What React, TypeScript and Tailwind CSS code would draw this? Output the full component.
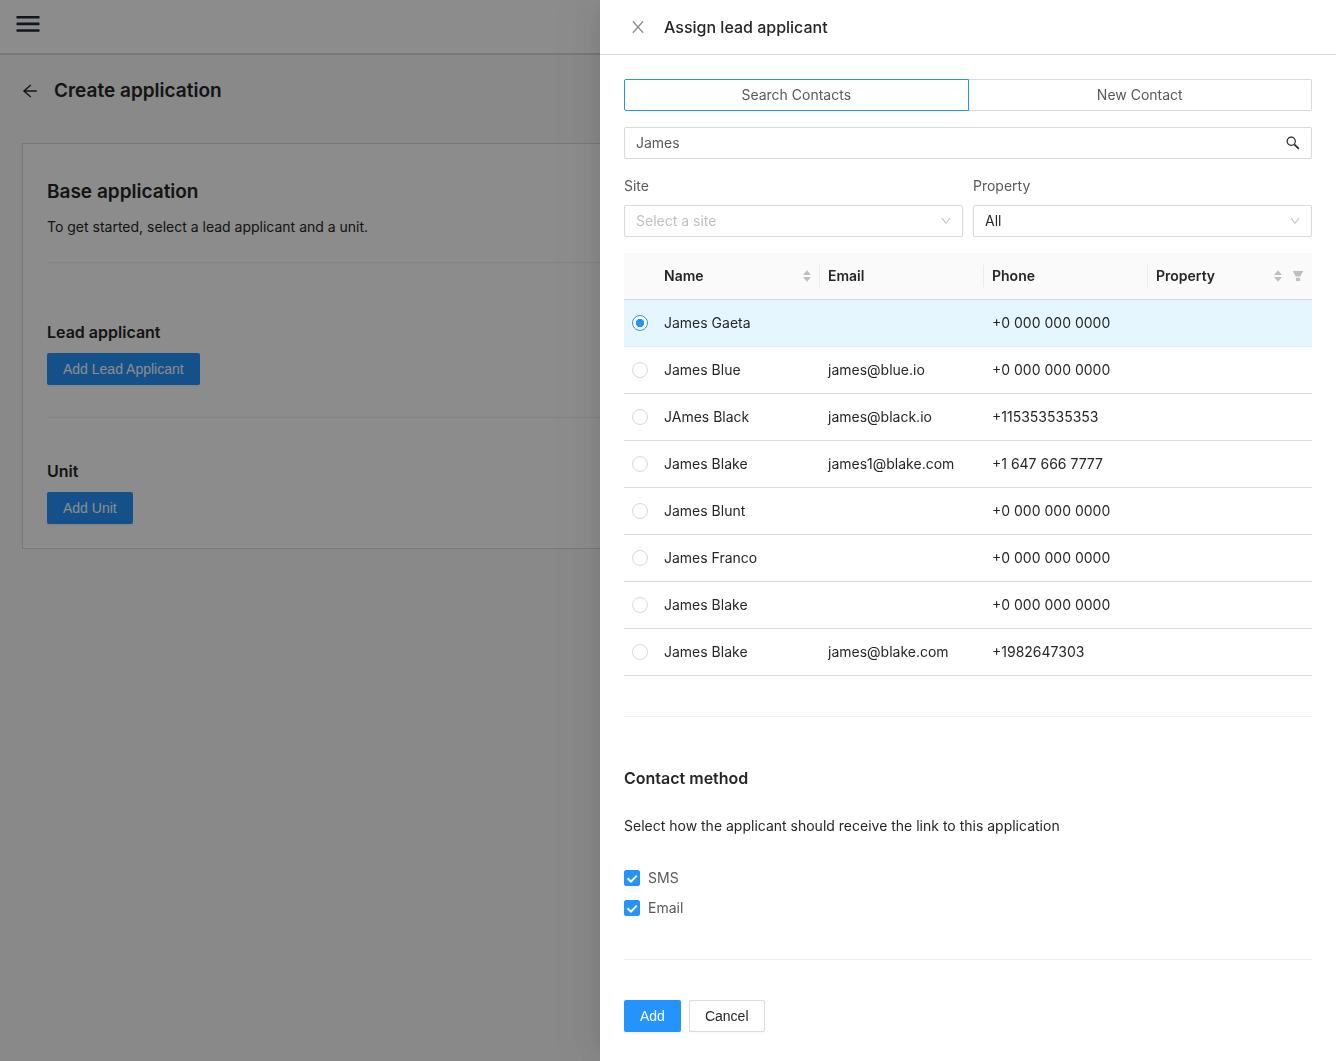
import { useState } from 'react';
import { AiOutlineDown } from 'react-icons/ai';

const contacts = [
  { id: 1, name: 'James Gaeta', email: '', phone: '+0 000 000 0000' },
  { id: 2, name: 'James Blue', email: 'james@blue.io', phone: '+0 000 000 0000' },
  { id: 3, name: 'JAmes Black', email: 'james@black.io', phone: '+115353535353' },
  { id: 4, name: 'James Blake', email: 'james1@blake.com', phone: '+1 647 666 7777' },
  { id: 5, name: 'James Blunt', email: '', phone: '+0 000 000 0000' },
  { id: 6, name: 'James Franco', email: '', phone: '+0 000 000 0000' },
  { id: 7, name: 'James Blake', email: '', phone: '+0 000 000 0000' },
  { id: 8, name: 'James Blake', email: 'james@blake.com', phone: '+1982647303' },
];

const primaryButton =
  'h-8 rounded-xs bg-[#2593fc] px-4 font-["Liberation_Sans",sans-serif] text-sm text-white shadow-[0_2px_0_rgba(0,0,0,0.045)]';

function Sorter() {
  return (
    <button type="button" aria-label="Sort" className="text-[#bfbfbf]">
      <svg width="8" height="12" viewBox="0 0 8 12" fill="currentColor">
        <path d="M4 0.2 7.6 4.6Q7.8 5 7.3 5H0.7Q0.2 5 0.4 4.6Z" />
        <path d="M4 11.8 7.6 7.4Q7.8 7 7.3 7H0.7Q0.2 7 0.4 7.4Z" />
      </svg>
    </button>
  );
}

function HeaderCell({ title, sortable, filterable, divider }: { title: string; sortable?: boolean; filterable?: boolean; divider?: boolean }) {
  return (
    <th scope="col" className="h-[47px] border-b border-[#d9d9d9] p-0 text-left font-semibold">
      <div className={`flex h-[22px] items-center justify-between px-2 ${divider ? 'border-r border-[#ebebeb]' : ''}`}>
        <span>{title}</span>
        <span className="flex items-center gap-2.5">
          {sortable && <Sorter />}
          {filterable && (
            <button type="button" aria-label="Filter" className="text-[#bfbfbf]">
              <svg width="12" height="12" viewBox="0 0 12 12" fill="currentColor">
                <path d="M1.2 1H10.8Q11.2 1 11 1.4L8.3 6.4H3.7L1 1.4Q0.8 1 1.2 1Z" />
                <path d="M3.9 7.7H8.1V10.6Q8.1 11 7.7 11H4.3Q3.9 11 3.9 10.6Z" />
              </svg>
            </button>
          )}
        </span>
      </div>
    </th>
  );
}

function SelectField({ id, label, value, muted }: { id: string; label: string; value: string; muted?: boolean }) {
  return (
    <div className="flex-1">
      <label htmlFor={id} className="mb-2 block text-[#595959]">
        {label}
      </label>
      <div className="relative">
        <select
          id={id}
          className={`h-8 w-full appearance-none rounded-xs border border-[#d9d9d9] bg-white px-[11px] ${muted ? 'text-[#bfbfbf]' : 'text-[#262626]'}`}
        >
          <option>{value}</option>
        </select>
        <AiOutlineDown size={12} className="pointer-events-none absolute right-[11px] top-[10px] text-[#bfbfbf]" />
      </div>
    </div>
  );
}

function Checkbox({ label }: { label: string }) {
  const [checked, setChecked] = useState(true);

  return (
    <label className="flex items-center gap-2 text-[#595959]">
      <span className="relative size-4">
        <input
          type="checkbox"
          checked={checked}
          onChange={(e) => setChecked(e.target.checked)}
          className="block size-4 appearance-none rounded-xs border border-[#d9d9d9] bg-white checked:border-[#2593fc] checked:bg-[#2593fc]"
        />
        {checked && (
          <svg viewBox="0 0 16 16" className="pointer-events-none absolute inset-0" fill="none" stroke="#fff" strokeWidth="2">
            <path d="M3.4 8.2 7 11.6 12.8 5.6" />
          </svg>
        )}
      </span>
      {label}
    </label>
  );
}

function ApplicationPage() {
  return (
    <div className="min-h-screen bg-[#fafafa]">
      <header className="flex h-[55px] items-center border-b-2 border-[#dcdcdc] bg-white px-4 pb-1.5">
        <button type="button" aria-label="Menu">
          <svg width="24" height="16" viewBox="0 0 24 16" fill="#1f2933">
            <rect x="0.5" y="0" width="23" height="2.6" rx="0.4" />
            <rect x="0.5" y="6.6" width="23" height="2.6" rx="0.4" />
            <rect x="0.5" y="13.2" width="23" height="2.6" rx="0.4" />
          </svg>
        </button>
      </header>

      <main className="px-[22px] pt-5">
        <div className="flex items-center gap-4">
          <button type="button" aria-label="Back">
            <svg width="16" height="16" viewBox="0 0 16 16" fill="none" stroke="currentColor" strokeWidth="1.4">
              <path d="M14.8 8H2M8.8 1.9 1.9 8 8.8 14.1" />
            </svg>
          </button>
          <h1 className="text-[19px] leading-8 font-semibold">Create application</h1>
        </div>

        <section className="mt-9 border border-[#d9d9d9] bg-white p-6">
          <h2 className="text-[19px] leading-12 font-semibold">Base application</h2>
          <p>To get started, select a lead applicant and a unit.</p>
          <hr className="mt-6 border-[#f0f0f0]" />
          <h3 className="mt-14 text-base leading-[26px] font-semibold">Lead applicant</h3>
          <button type="button" className={`mt-2 block ${primaryButton}`}>Add Lead Applicant</button>
          <hr className="mt-8 border-[#f0f0f0]" />
          <h3 className="mt-10 text-base leading-[26px] font-semibold">Unit</h3>
          <button type="button" className={`mt-2 block ${primaryButton}`}>Add Unit</button>
        </section>
      </main>
    </div>
  );
}

function AssignDrawer() {
  const [selected, setSelected] = useState(1);
  const [query, setQuery] = useState('James');

  return (
    <aside
      role="dialog"
      aria-labelledby="drawer-title"
      className="fixed inset-y-0 right-0 w-[736px] max-w-full overflow-y-auto bg-white shadow-[-6px_0_16px_-8px_rgba(0,0,0,0.08),-9px_0_28px_0_rgba(0,0,0,0.05),-12px_0_48px_16px_rgba(0,0,0,0.03)]"
    >
      <div className="flex h-[55px] items-center gap-[18px] border-b border-[#d9d9d9] px-[30px]">
        <button type="button" aria-label="Close" className="text-[#8c8c8c]">
          <svg width="16" height="16" viewBox="0 0 16 16" fill="none" stroke="currentColor" strokeWidth="1.3">
            <path d="M2.8 2.2 13.2 13.8M13.2 2.2 2.8 13.8" />
          </svg>
        </button>
        <h2 id="drawer-title" className="text-base leading-6 font-medium">Assign lead applicant</h2>
      </div>

      <div className="p-6">
        {/* Tabs */}
        <div className="flex text-[#595959]">
          <button type="button" className="h-8 flex-1 rounded-l-xs border border-[#2593fc]">Search Contacts</button>
          <button type="button" className="h-8 flex-1 rounded-r-xs border border-l-0 border-[#d9d9d9]">New Contact</button>
        </div>

        {/* Search */}
        <div className="mt-4 flex h-8 items-center rounded-xs border border-[#d9d9d9] px-[11px]">
          <input
            type="text"
            aria-label="Search contacts"
            value={query}
            onChange={(e) => setQuery(e.target.value)}
            className="min-w-0 flex-1 text-[#595959] outline-none"
          />
          <button type="button" aria-label="Search">
            <svg width="14" height="14" viewBox="0 0 14 14" fill="none" stroke="currentColor">
              <circle cx="5.2" cy="5.2" r="4.1" strokeWidth="1.2" />
              <path d="M8.3 8.3 12.9 12.9" strokeWidth="1.7" />
            </svg>
          </button>
        </div>

        <div className="mt-4 flex gap-[10px]">
          <SelectField id="site" label="Site" value="Select a site" muted />
          <SelectField id="property" label="Property" value="All" />
        </div>

        {/* Contacts */}
        <table className="mt-4 w-full table-fixed border-separate border-spacing-0">
          <thead>
            <tr className="bg-[#fafafa]">
              <th aria-label="Selected" className="w-8 border-b border-[#d9d9d9]" />
              <HeaderCell title="Name" sortable divider />
              <HeaderCell title="Email" divider />
              <HeaderCell title="Phone" divider />
              <HeaderCell title="Property" sortable filterable />
            </tr>
          </thead>
          <tbody>
            {contacts.map((c) => {
              const active = c.id === selected;
              const cell = `h-[47px] border-b px-2 py-0 ${active ? 'border-[#daf0fb]' : 'border-[#d9d9d9]'}`;
              return (
                <tr key={c.id} className={active ? 'bg-[#e6f6ff]' : ''}>
                  <td className={cell}>
                    <input
                      type="radio"
                      name="contact"
                      aria-label={c.name}
                      checked={active}
                      onChange={() => setSelected(c.id)}
                      className="block size-4 appearance-none rounded-full border border-[#d9d9d9] bg-white checked:border-[#2593fc] checked:bg-[radial-gradient(circle,#2593fc_4px,#fff_4.5px)]"
                    />
                  </td>
                  <td className={cell}>{c.name}</td>
                  <td className={cell}>{c.email}</td>
                  <td className={cell}>{c.phone}</td>
                  <td className={cell} />
                </tr>
              );
            })}
          </tbody>
        </table>

        <hr className="mt-10 border-[#f0f0f0]" />

        <h3 className="mt-12 text-base leading-[26px] font-semibold">Contact method</h3>
        <p className="mt-6">Select how the applicant should receive the link to this application</p>
        <div className="mt-[30px] flex flex-col items-start gap-2">
          <Checkbox label="SMS" />
          <Checkbox label="Email" />
        </div>

        <hr className="mt-10 border-[#f0f0f0]" />

        <div className="mt-10 flex gap-2">
          <button type="button" className={primaryButton}>Add</button>
          <button
            type="button"
            className='h-8 rounded-xs border border-[#d9d9d9] bg-white px-[15px] font-["Liberation_Sans",sans-serif] text-sm shadow-[0_2px_0_rgba(0,0,0,0.015)]'
          >
            Cancel
          </button>
        </div>
      </div>
    </aside>
  );
}

export default function App() {
  return (
    <div className="font-[Inter,sans-serif] text-sm leading-[22px] text-[#262626]">
      <ApplicationPage />
      <div className="fixed inset-0 bg-black/45" />
      <AssignDrawer />
    </div>
  );
}
